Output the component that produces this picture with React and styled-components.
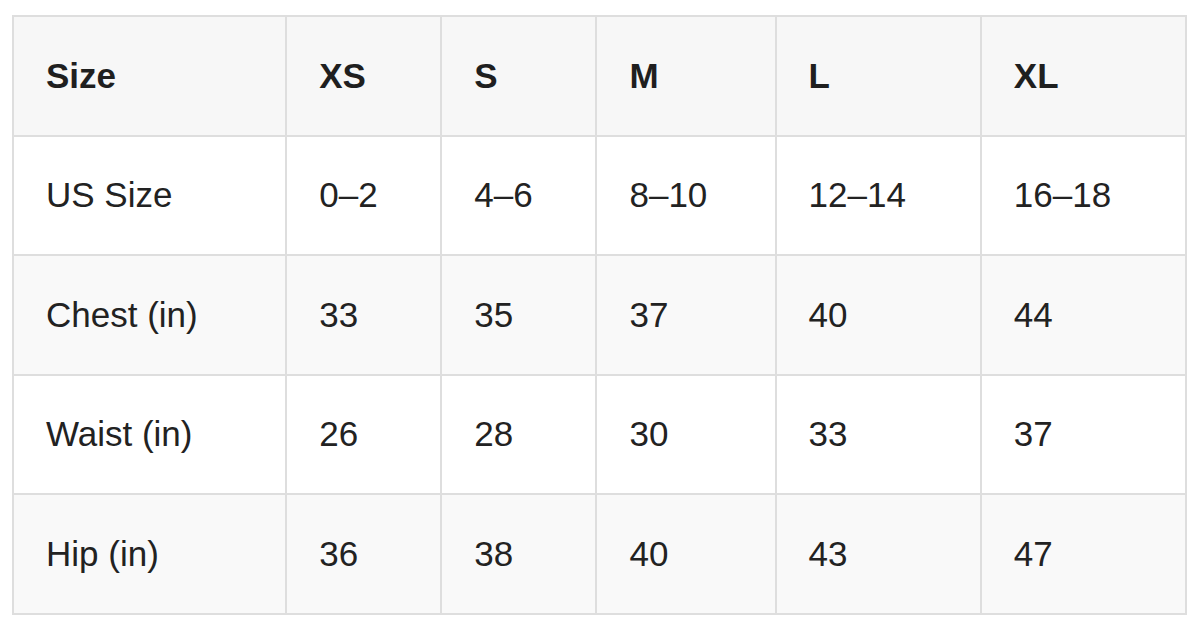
import styled, { createGlobalStyle } from "styled-components";

const GlobalStyle = createGlobalStyle`
  html, body {
    margin: 0;
    padding: 0;
    background: #ffffff;
  }
  body {
    font-family: "Liberation Sans", Arial, Helvetica, sans-serif;
    color: #222;
  }
`;

const columns = ["Size", "XS", "S", "M", "L", "XL"];
const colWidths = [273, 155, 155, 179, 205, 205];

const rows = [
  ["US Size", "0–2", "4–6", "8–10", "12–14", "16–18"],
  ["Chest (in)", "33", "35", "37", "40", "44"],
  ["Waist (in)", "26", "28", "30", "33", "37"],
  ["Hip (in)", "36", "38", "40", "43", "47"],
];

export default function App() {
  return (
    <>
      <GlobalStyle />
      <Page>
        <SizeTable>
          <colgroup>
            {colWidths.map((w, i) => (
              <col key={i} style={{ width: w }} />
            ))}
          </colgroup>
          <thead>
            <tr>
              {columns.map((c) => (
                <HeadCell key={c}>{c}</HeadCell>
              ))}
            </tr>
          </thead>
          <tbody>
            {rows.map((r, i) => (
              <Row key={r[0]} $striped={i % 2 === 1}>
                {r.map((v, j) => (
                  <Cell key={j}>{v}</Cell>
                ))}
              </Row>
            ))}
          </tbody>
        </SizeTable>
      </Page>
    </>
  );
}

const Page = styled.div`
  padding: 15px 12px;
`;

const SizeTable = styled.table`
  border-collapse: collapse;
  table-layout: fixed;
  width: 1175px;
  font-size: 35px;
  line-height: 1.15;
`;

const HeadCell = styled.th`
  height: 119.5px;
  padding: 0 0 0 32px;
  text-align: left;
  font-weight: 700;
  color: #1f1f1f;
  background: #f7f7f7;
  border: 2px solid #dedede;
  box-sizing: border-box;
`;

const Row = styled.tr`
  background: ${(p) => (p.$striped ? "#f9f9f9" : "#ffffff")};
`;

const Cell = styled.td`
  height: 119.5px;
  padding: 0 0 0 32px;
  font-weight: 400;
  color: #222;
  border: 2px solid #dedede;
  box-sizing: border-box;
`;
